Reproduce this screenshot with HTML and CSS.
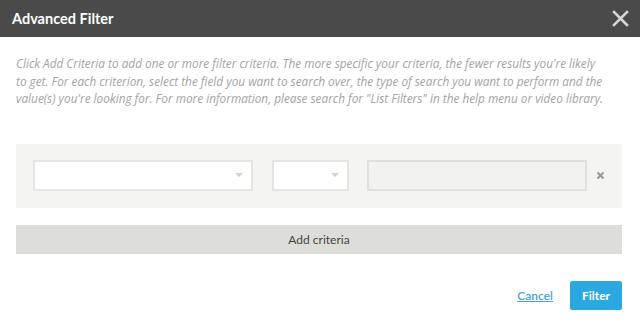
FILE: index.html
```html
<!DOCTYPE html>
<html lang="en">
<head>
    <meta charset="UTF-8">
    <title>Advanced Filter</title>
    <link rel="stylesheet" href="styles.css">
</head>
<body>
    <div class="dialog">
        <div class="dialog-header">
            <div class="dialog-title">Advanced Filter</div>
            <button class="close-button" aria-label="Close">
                <svg width="17" height="17" viewBox="0 0 17 17">
                    <path d="M2 2 L15 15 M15 2 L2 15" stroke="#d6d6d6" stroke-width="2.6" stroke-linecap="square"/>
                </svg>
            </button>
        </div>

        <div class="dialog-body">
            <p class="intro">Click Add Criteria to add one or more filter criteria. The more specific your criteria, the fewer results you're likely<br>
                to get. For each criterion, select the field you want to search over, the type of search you want to perform and the<br>
                value(s) you're looking for. For more information, please search for "List Filters" in the help menu or video library.</p>

            <div class="criteria-panel">
                <div class="criteria-row">
                    <div class="select field-select"><span class="caret"></span></div>
                    <div class="select type-select"><span class="caret"></span></div>
                    <div class="value-input"></div>
                    <span class="remove-row">
                        <svg width="9" height="9" viewBox="0 0 9 9">
                            <path d="M1.5 1.5 L7.5 7.5 M7.5 1.5 L1.5 7.5" stroke="#9a9a9a" stroke-width="2.2"/>
                        </svg>
                    </span>
                </div>
            </div>

            <button class="add-criteria">Add criteria</button>

            <div class="dialog-footer">
                <a href="#" class="cancel-link">Cancel</a>
                <button class="filter-button">Filter</button>
            </div>
        </div>
    </div>
</body>
</html>
```

FILE: styles.css
```css
* {
    margin: 0;
    padding: 0;
    box-sizing: border-box;
    font-family: 'Lato', 'Open Sans', sans-serif;
}

body {
    background-color: #fff;
    width: 640px;
    height: 326px;
    overflow: hidden;
}

.dialog {
    width: 640px;
}

/* Header */
.dialog-header {
    height: 37px;
    background-color: #4a4a4a;
    display: flex;
    align-items: center;
    justify-content: space-between;
    padding: 0 11px 0 12px;
}

.dialog-title {
    color: #fff;
    font-size: 14.5px;
    font-weight: 700;
}

.close-button {
    background: none;
    border: none;
    display: flex;
}

/* Body */
.dialog-body {
    padding: 0 18px 0 16px;
}

.intro {
    margin-top: 18px;
    color: #a3a3a3;
    font-family: 'Open Sans', sans-serif;
    font-size: 11.8px;
    font-style: italic;
    line-height: 17.5px;
    white-space: nowrap;
}

.criteria-panel {
    margin-top: 36px;
    background-color: #f4f4f2;
    padding: 16px 17px 17px 17px;
}

.criteria-row {
    display: flex;
    align-items: center;
}

.select {
    flex: none;
    height: 31px;
    background-color: #fff;
    border: 2px solid #e4e4e0;
    position: relative;
}

.field-select {
    width: 220px;
    margin-right: 19px;
}

.type-select {
    width: 77px;
    margin-right: 18px;
}

.caret {
    position: absolute;
    right: 8px;
    top: 11px;
    border-left: 4px solid transparent;
    border-right: 4px solid transparent;
    border-top: 4px solid #d0d0cc;
}

.value-input {
    flex: none;
    width: 220px;
    height: 31px;
    background-color: #f2f2f0;
    border: 2px solid #e0e0dc;
    margin-right: 9px;
}

.remove-row {
    display: flex;
}

/* Add criteria */
.add-criteria {
    display: block;
    width: 100%;
    height: 29px;
    margin-top: 17px;
    background-color: #deded9;
    border: none;
    color: #444;
    font-size: 12px;
}

/* Footer */
.dialog-footer {
    display: flex;
    justify-content: flex-end;
    align-items: center;
    gap: 17px;
    margin-top: 27px;
}

.cancel-link {
    color: #4ba0d6;
    font-size: 12px;
    font-weight: 600;
}

.filter-button {
    width: 52px;
    height: 29px;
    background-color: #2ba7e2;
    border: none;
    border-radius: 2px;
    color: #fff;
    font-size: 12px;
    font-weight: 700;
}
```
